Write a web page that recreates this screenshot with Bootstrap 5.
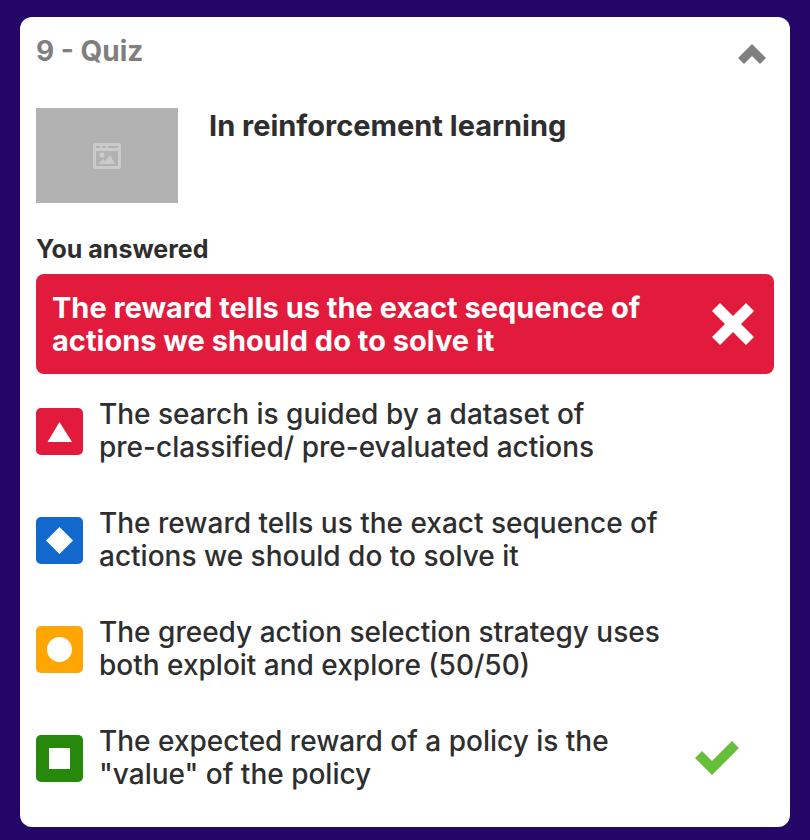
<!DOCTYPE html>
<html lang="en">
<head>
<meta charset="utf-8">
<meta name="viewport" content="width=device-width, initial-scale=1">
<title>9 - Quiz</title>
<link rel="stylesheet" href="https://cdn.jsdelivr.net/npm/bootstrap@5.3.0/dist/css/bootstrap.min.css">
<style>
body { background: #240568; color: #2e2e2e; font-family: Inter, "Noto Sans", sans-serif; font-size: 28px; line-height: 33px; font-weight: 500; }
.page { padding: 17px 20px 13px; }
.quiz-card { background: #fff; border-radius: 12px; padding: 17px 16px 36px; }
.quiz-label { color: #7f7f7f; font-size: 28px; line-height: 34px; }
.toggle { color: #808080; padding: 10px 8px 6px; line-height: 0; }
.question { gap: 31px; margin-top: 38px; }
.question-title { font-size: 29px; line-height: 36px; }
.thumb { background: #b2b2b2; width: 142px; height: 95px; }
.answer-label { font-size: 25px; line-height: 30px; margin: 31px 0 10px; }
.answer { background: #e21b3c; border-radius: 8px; padding: 17px 20px 17px 16px; gap: 16px; font-size: 29px; }
.options { gap: 43px; margin-top: 24px; }
.option { gap: 16px; }
.tick { margin-right: 35px; }
</style>
</head>
<body>
<main class="page">
  <section class="quiz-card">
    <header class="d-flex justify-content-between align-items-start">
      <h1 class="quiz-label fw-bold mb-0">9 - Quiz</h1>
      <button type="button" class="toggle btn border-0" aria-label="Collapse question" data-bs-toggle="collapse" data-bs-target="#quiz-body" aria-expanded="true">
        <svg width="28" height="20" viewBox="0 0 28 20" fill="currentColor" aria-hidden="true"><path d="M14 0L28 14L22 20L14 12L6 20L0 14Z"/></svg>
      </button>
    </header>
    <div id="quiz-body" class="collapse show">
      <div class="question d-flex align-items-start">
        <div class="thumb d-flex align-items-center justify-content-center flex-shrink-0">
          <svg width="28" height="26" viewBox="0 0 28 26" aria-hidden="true">
            <path fill="#cbcbcb" fill-rule="evenodd" d="M2 0H26Q28 0 28 2V24Q28 26 26 26H2Q0 26 0 24V2Q0 0 2 0ZM3 8V23H25V8ZM3 3V5H7V3ZM9 3V5H13V3ZM15 3V5H25V3Z"/>
            <circle cx="9" cy="12" r="2.5" fill="#cbcbcb"/>
            <path fill="#cbcbcb" d="M5 21L10 16L12 18L17 12L22 21Z"/>
          </svg>
        </div>
        <h2 class="question-title fw-bold mb-0">In reinforcement learning</h2>
      </div>
      <h3 class="answer-label fw-bold">You answered</h3>
      <div class="answer d-flex align-items-center justify-content-between text-white fw-bold">
        <div>The reward tells us the exact sequence of<br>actions we should do to solve it</div>
        <svg class="flex-shrink-0" width="42" height="42" viewBox="0 0 42 42" fill="#fff" role="img" aria-label="Incorrect"><path d="M8 0L21 13L34 0L42 8L29 21L42 34L34 42L21 29L8 42L0 34L13 21L0 8Z"/></svg>
      </div>
      <ul class="options list-unstyled d-flex flex-column mb-0">
        <li class="option d-flex align-items-center">
          <svg class="flex-shrink-0" width="47" height="47" viewBox="0 0 47 47" aria-hidden="true"><rect width="47" height="47" rx="5" fill="#e21b3c"/><path fill="#fff" d="M23.5 14L36 34H11.500Z"/></svg>
          <div>The search is guided by a dataset of<br>pre-classified/ pre-evaluated actions</div>
        </li>
        <li class="option d-flex align-items-center">
          <svg class="flex-shrink-0" width="47" height="47" viewBox="0 0 47 47" aria-hidden="true"><rect width="47" height="47" rx="5" fill="#1368ce"/><path fill="#fff" d="M23.500 10L37 23.500L23.500 37L10 23.500Z"/></svg>
          <div>The reward tells us the exact sequence of<br>actions we should do to solve it</div>
        </li>
        <li class="option d-flex align-items-center">
          <svg class="flex-shrink-0" width="47" height="47" viewBox="0 0 47 47" aria-hidden="true"><rect width="47" height="47" rx="5" fill="#ffa602"/><circle cx="23.500" cy="23.500" r="12.500" fill="#fff"/></svg>
          <div>The greedy action selection strategy uses<br>both exploit and explore (50/50)</div>
        </li>
        <li class="option d-flex align-items-center">
          <svg class="flex-shrink-0" width="47" height="47" viewBox="0 0 47 47" aria-hidden="true"><rect width="47" height="47" rx="5" fill="#26890c"/><path fill="#fff" d="M13 13H34V34H13Z"/></svg>
          <div>The expected reward of a policy is the<br>"value" of the policy</div>
          <svg class="tick flex-shrink-0 ms-auto" width="44" height="34" viewBox="0 0 44 34" fill="#66bf39" role="img" aria-label="Correct"><path d="M37 0L44 7L17 34L0 17L7 10L17 20Z"/></svg>
        </li>
      </ul>
    </div>
  </section>
</main>
<script src="https://cdn.jsdelivr.net/npm/bootstrap@5.3.0/dist/js/bootstrap.bundle.min.js"></script>
</body>
</html>
